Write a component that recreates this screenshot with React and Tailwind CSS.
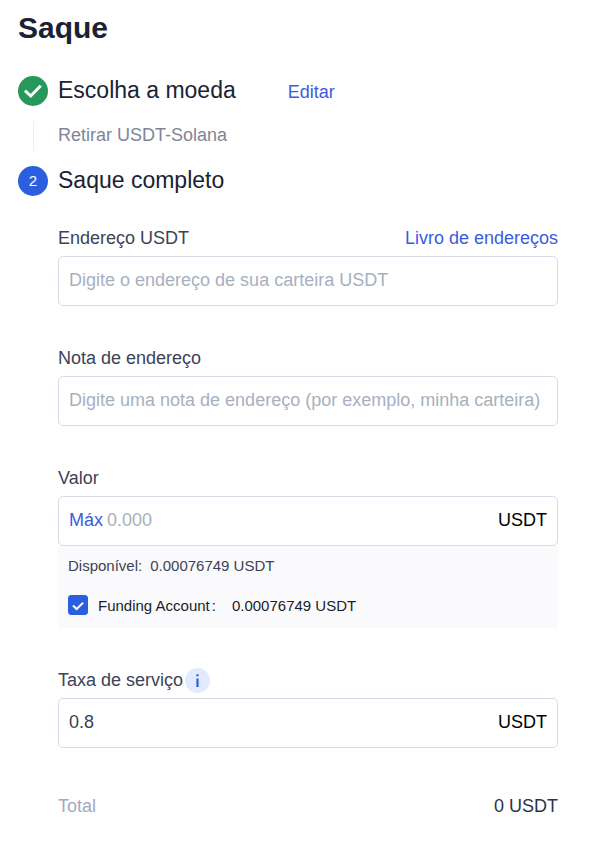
import { useState } from 'react';

function Field({ id, label, action, children }) {
  return (
    <div>
      <div className="flex h-6 items-center justify-between mb-1.5">
        <label htmlFor={id}>{label}</label>
        {action}
      </div>
      {children}
    </div>
  );
}

const boxClass =
  'w-full h-[50px] px-2.5 pb-0.5 rounded-[5px] border border-[#d8dae8] bg-white outline-none placeholder:text-[#a7b0c0]';

export default function App() {
  const [address, setAddress] = useState('');
  const [note, setNote] = useState('');
  const [amount, setAmount] = useState('');
  const [funding, setFunding] = useState(true);

  return (
    <main className="bg-white pl-[18px] pr-[49px] pt-2 pb-6 font-['Liberation_Sans',Arial,sans-serif] text-[18px] leading-6 text-[#3c4257]">
      <h1 className="text-[30px] leading-10 font-bold text-[#1b2233]">Saque</h1>

      {/* step 1 */}
      <section className="mt-7">
        <div className="flex items-center h-[30px]">
          <span className="flex items-center justify-center w-[30px] h-[30px] rounded-full bg-[#26985a]">
            <svg width="30" height="30" viewBox="0 0 30 30" fill="none" stroke="#fff" strokeWidth="3">
              <path d="M7 14.6 12.7 20 22.7 9.8" />
            </svg>
          </span>
          <h2 className="ml-2.5 text-[23px] leading-[30px] text-[#1b2233] pb-0.5">Escolha a moeda</h2>
          <a href="#editar" className="ml-[52px] pt-0.5 text-[#3a5ce0]">Editar</a>
        </div>
        <div className="flex items-center my-[15px] h-[30px]">
          <span className="w-px h-full ml-[15px] mr-6 bg-[#efeff3]" />
          <p className="text-[#7f8597] pb-0.5">Retirar USDT-Solana</p>
        </div>
      </section>

      {/* step 2 */}
      <section>
        <div className="flex items-center h-[30px]">
          <span className="flex items-center justify-center w-[30px] h-[30px] rounded-full bg-[#2b5fe0] text-[15px] text-white">
            2
          </span>
          <h2 className="ml-2.5 text-[23px] leading-[30px] text-[#1b2233] pb-0.5">Saque completo</h2>
        </div>

        <form className="ml-10 mt-[30px] flex flex-col gap-10" onSubmit={(e) => e.preventDefault()}>
          <Field
            id="address"
            label="Endereço USDT"
            action={<a href="#livro" className="text-[#3a5ce0]">Livro de endereços</a>}
          >
            <input
              id="address"
              className={boxClass}
              placeholder="Digite o endereço de sua carteira USDT"
              value={address}
              onChange={(e) => setAddress(e.target.value)}
            />
          </Field>

          <Field id="note" label="Nota de endereço">
            <input
              id="note"
              className={boxClass}
              placeholder="Digite uma nota de endereço (por exemplo, minha carteira)"
              value={note}
              onChange={(e) => setNote(e.target.value)}
            />
          </Field>

          <Field id="amount" label="Valor">
            <div className={`${boxClass} flex items-center`}>
              <button type="button" className="text-[#3a5ce0]" onClick={() => setAmount('0.00076749')}>
                Máx
              </button>
              <input
                id="amount"
                className="ml-1 min-w-0 flex-1 outline-none placeholder:text-[#a7b0c0]"
                placeholder="0.000"
                value={amount}
                onChange={(e) => setAmount(e.target.value)}
              />
              <span className="text-black">USDT</span>
            </div>
            <div className="bg-[#fafafc] px-2.5 pt-2 pb-[11px] text-[15px]">
              <p className="flex gap-2">
                <span>Disponível:</span>
                <span>0.00076749 USDT</span>
              </p>
              <div className="mt-[15px] flex items-center h-6 text-[#1b1d28]">
                <span className="relative w-5 h-5">
                  <input
                    id="funding"
                    type="checkbox"
                    className="block w-5 h-5 appearance-none rounded-[3px] border border-[#2b5fe0] checked:bg-[#2b5fe0]"
                    checked={funding}
                    onChange={(e) => setFunding(e.target.checked)}
                  />
                  {funding && (
                    <svg className="absolute inset-0 pointer-events-none" width="20" height="20" viewBox="0 0 20 20" fill="none" stroke="#fff" strokeWidth="2">
                      <path d="M5 10.5 8.6 14 15.2 7.6" />
                    </svg>
                  )}
                </span>
                <label htmlFor="funding" className="ml-2.5 pt-0.5 flex gap-0.5">
                  <span>Funding Account</span>
                  <span>:</span>
                </label>
                <span className="ml-4 pt-0.5">0.00076749 USDT</span>
              </div>
            </div>
          </Field>

          <Field
            id="fee"
            label={
              <span className="flex items-center gap-0.5">
                Taxa de serviço
                <svg width="25" height="25" viewBox="0 0 25 25">
                  <circle cx="12.5" cy="12.5" r="12.5" fill="#e2eafd" />
                  <path d="M11.4 6.2h2.2v2h-2.2zM11.4 10.6h2.2v8.4h-2.2z" fill="#2b5fe0" />
                </svg>
              </span>
            }
          >
            <div className={`${boxClass} flex items-center`}>
              <input id="fee" className="min-w-0 flex-1 outline-none" value="0.8" readOnly />
              <span className="text-black">USDT</span>
            </div>
          </Field>

          <div className="mt-1.5 flex justify-between">
            <span className="text-[#a5a9bd]">Total</span>
            <span className="text-[#2c3348]">0 USDT</span>
          </div>
        </form>
      </section>
    </main>
  );
}
